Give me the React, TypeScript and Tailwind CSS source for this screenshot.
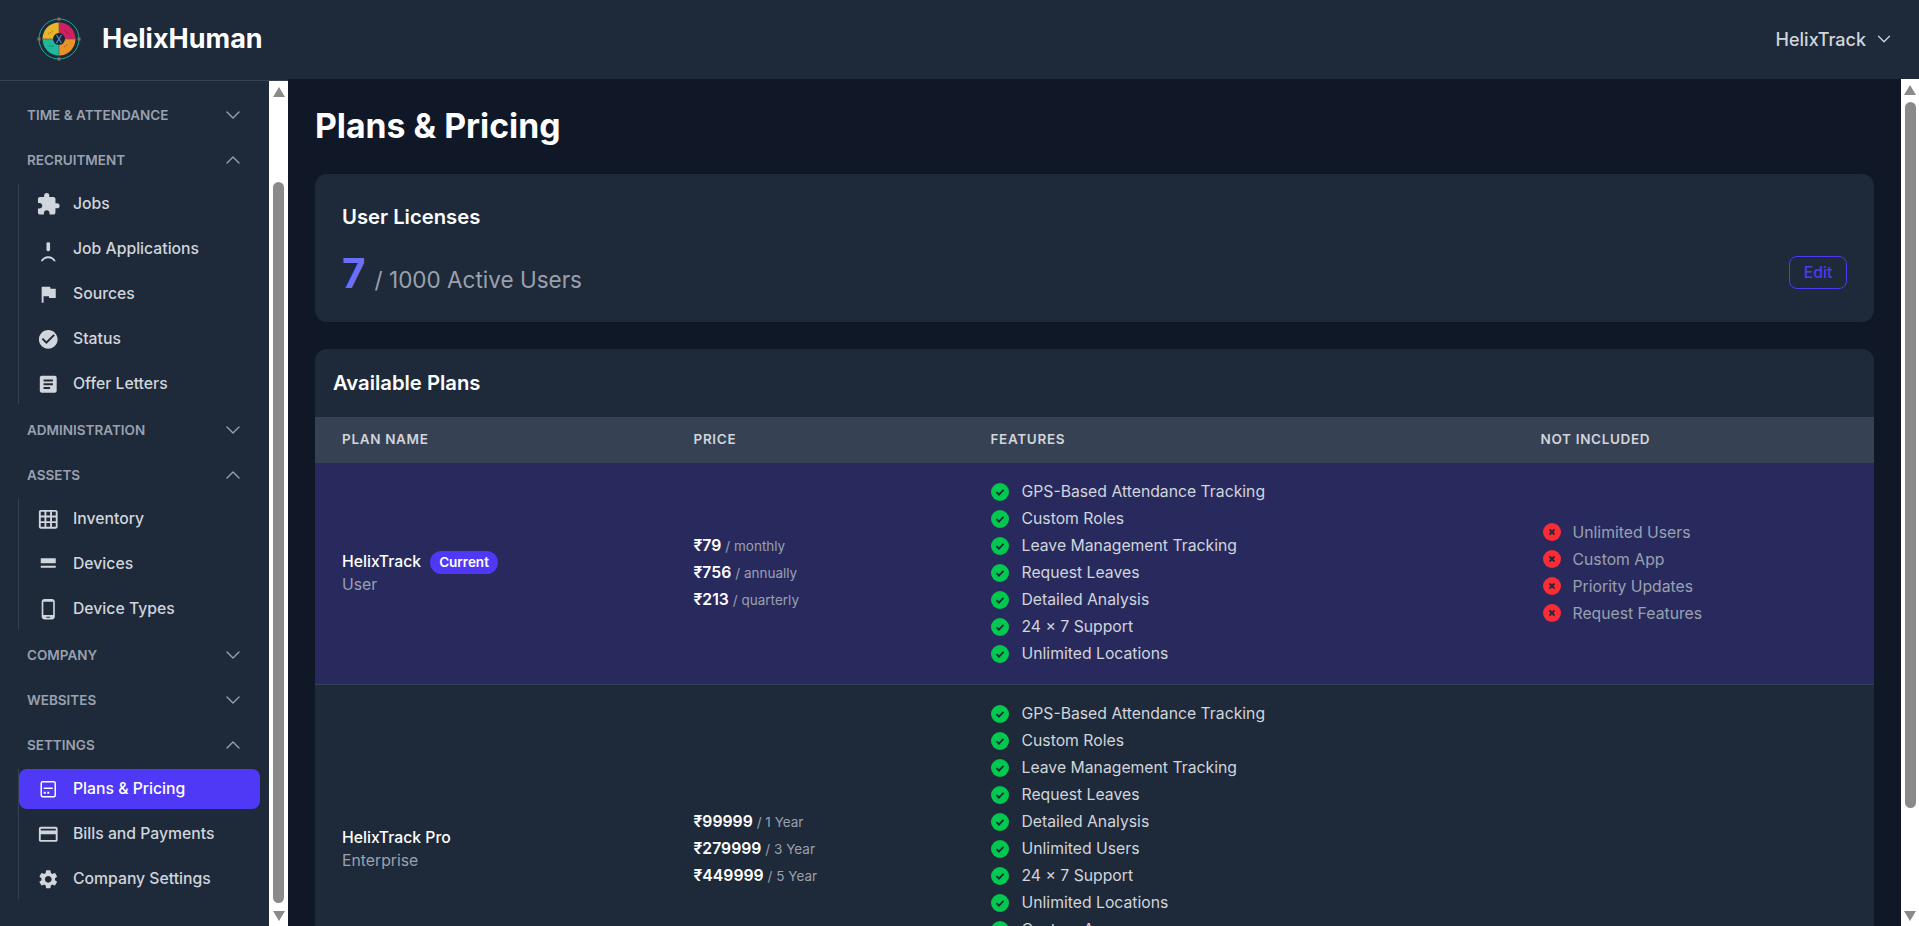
import React from "react";
import {
  MdExtension, MdFlag, MdCheckCircle, MdArticle, MdGridOn, MdPhoneAndroid, MdOutlineCreditCard, MdSettings,
} from "react-icons/md";
import { FiChevronDown, FiChevronUp } from "react-icons/fi";

const FONT = "font-['Inter',sans-serif]";

function JobAppIcon() {
  return (
    <svg viewBox="-1.25 -1.25 22.5 22.5" className="w-[22.5px] h-[22.5px] overflow-visible" fill="currentColor">
      <rect x="8.2" y="3" width="3.6" height="9" rx="1.4" />
      <path d="M2.500 22c1-3 4-5 7.500-5s6.500 2 7.500 5h-2c-1-2-3-3-5.500-3s-4.500 1-5.500 3z" />
    </svg>
  );
}

function DevicesIcon() {
  return (
    <svg viewBox="-1.25 -1.25 22.5 22.5" className="w-[22.5px] h-[22.5px]" fill="currentColor">
      <rect x="2.500" y="4" width="15" height="5" />
      <rect x="2.500" y="11.500" width="15" height="2" />
    </svg>
  );
}

function PlansIcon() {
  return (
    <svg viewBox="-1.25 -1.25 22.5 22.5" className="w-[22.5px] h-[22.5px]" fill="none" stroke="currentColor" strokeWidth="1.5">
      <rect x="3" y="2.500" width="14" height="15" rx="1.5" />
      <path d="M5.500 9h9" />
      <rect x="5.500" y="12.500" width="2" height="2" fill="currentColor" stroke="none" />
      <rect x="9" y="12.500" width="2" height="2" fill="currentColor" stroke="none" />
    </svg>
  );
}

function Logo() {
  return (
    <svg viewBox="0 0 44 44" className="w-11 h-11" aria-hidden="true">
      <circle cx="22" cy="22" r="20" fill="none" stroke="#14b8a6" strokeWidth="0.900" />
      <rect x="20.500" y="0.500" width="3" height="3" fill="#8b7355" />
      <rect x="20.500" y="40.500" width="3" height="3" fill="#8b7355" />
      <rect x="0.500" y="20.500" width="3" height="3" fill="#8b7355" />
      <rect x="40.500" y="20.500" width="3" height="3" fill="#8b7355" />
      <path d="M22 5.500a16.500 16.500 0 0 0-16.500 16.500h16.500z" fill="#eab52a" />
      <path d="M22 5.500a16.500 16.500 0 0 1 16.500 16.500h-16.500z" fill="#d0205f" />
      <path d="M5.500 22a16.500 16.500 0 0 0 16.500 16.500v-16.500z" fill="#20b89a" />
      <path d="M38.500 22a16.500 16.500 0 0 1-16.500 16.500v-16.500z" fill="#e8932a" />
      <path d="M22 5v34M5 22h34" stroke="#6b5f52" strokeWidth="0.800" />
      <path d="M11 17l5-3M27 13l5 4M12 29h4M27 30l4-3" stroke="#00000055" strokeWidth="1" strokeDasharray="1.500 1" fill="none" />
      <circle cx="22" cy="22" r="6" fill="#16263a" />
      <path d="M19.500 18l5 8M24.500 18l-5 8" stroke="#5b8fc9" strokeWidth="1.100" />
    </svg>
  );
}

type Item = { label: string; icon: React.ReactNode; active?: boolean };
type Section = { title: string; items?: Item[] };

const icon = "w-[22.5px] h-[22.5px]";
const sections: Section[] = [
  { title: "Time & Attendance" },
  {
    title: "Recruitment",
    items: [
      { label: "Jobs", icon: <MdExtension className="w-[22.5px] h-[22.5px] scale-[1.1]" /> },
      { label: "Job Applications", icon: <JobAppIcon /> },
      { label: "Sources", icon: <MdFlag className={icon} /> },
      { label: "Status", icon: <MdCheckCircle className={icon} /> },
      { label: "Offer Letters", icon: <MdArticle className={icon} /> },
    ],
  },
  { title: "Administration" },
  {
    title: "Assets",
    items: [
      { label: "Inventory", icon: <MdGridOn className={icon} /> },
      { label: "Devices", icon: <DevicesIcon /> },
      { label: "Device Types", icon: <MdPhoneAndroid className={icon} /> },
    ],
  },
  { title: "Company" },
  { title: "Websites" },
  {
    title: "Settings",
    items: [
      { label: "Plans & Pricing", icon: <PlansIcon />, active: true },
      { label: "Bills and Payments", icon: <MdOutlineCreditCard className={icon} /> },
      { label: "Company Settings", icon: <MdSettings className={icon} /> },
    ],
  },
];

function Check() {
  return (
    <svg viewBox="0 0 18 18" className="w-[18px] h-[18px] shrink-0">
      <circle cx="9" cy="9" r="9" fill="#00c950" />
      <path d="M5.500 9.200l2.400 2.400 4.600-4.800" fill="none" stroke="#1e2939" strokeWidth="1.800" />
    </svg>
  );
}

function Cross() {
  return (
    <svg viewBox="0 0 18 18" className="w-[18px] h-[18px] shrink-0">
      <circle cx="9" cy="9" r="9" fill="#fb2c36" />
      <path d="M6.500 6.500l5 5M11.500 6.500l-5 5" fill="none" stroke="#1e2939" strokeWidth="1.800" />
    </svg>
  );
}

function Scrollbar({ thumb, width }: { thumb: string; width: string }) {
  return (
    <div className={`bg-white shrink-0 flex flex-col items-center h-full ${width}`}>
      <div className="w-0 h-0 mt-[6px] border-x-[6px] border-x-transparent border-b-[10px] border-b-[#8a8a8a]" />
      <div className={`w-[11px] rounded-full bg-[#8a8a8a] ${thumb}`} />
      <div className="mt-auto mb-[5px] w-0 h-0 border-x-[6px] border-x-transparent border-t-[10px] border-t-[#8a8a8a]" />
    </div>
  );
}

const plan1 = ["GPS-Based Attendance Tracking", "Custom Roles", "Leave Management Tracking", "Request Leaves", "Detailed Analysis", "24 × 7 Support", "Unlimited Locations"];
const missing = ["Unlimited Users", "Custom App", "Priority Updates", "Request Features"];
const plan2 = ["GPS-Based Attendance Tracking", "Custom Roles", "Leave Management Tracking", "Request Leaves", "Detailed Analysis", "Unlimited Users", "24 × 7 Support", "Unlimited Locations", "Custom App", "Priority Updates", "Request Features"];

function Features({ list }: { list: string[] }) {
  return (
    <ul className="flex flex-col gap-[6px]">
      {list.map((f) => (
        <li key={f} className="flex items-center gap-[13px] text-[15.75px] leading-[21px] text-gray-300">
          <Check />
          {f}
        </li>
      ))}
    </ul>
  );
}

function Prices({ list }: { list: [string, string][] }) {
  return (
    <div className="flex flex-col gap-[6px]">
      {list.map(([p, s]) => (
        <div key={p} className="leading-[21px] text-white text-[15.75px] font-semibold">
          {p} <span className="text-[13.5px] leading-none font-normal text-gray-400">/ {s}</span>
        </div>
      ))}
    </div>
  );
}

const cols = "grid grid-cols-[351.500px_297px_550px_1fr]";

export default function App() {
  return (
    <div className={`h-screen flex overflow-hidden bg-gray-900 ${FONT}`}>
      <aside className="w-[288px] shrink-0 flex flex-col bg-gray-800 h-full">
        <div className="h-[81px] shrink-0 border-b border-gray-700 flex items-center pl-[37px] pb-[2px]">
          <Logo />
          <span className="ml-[21px] text-[27px] font-bold text-white">HelixHuman</span>
        </div>
        <div className="flex flex-1 min-h-0">
          <nav className="flex-1 overflow-hidden pt-[16px] pl-[19px] pr-[9px]">
            {sections.map((s) => (
              <div key={s.title} className={s.items ? "mb-[8px]" : "mb-[9px]"}>
                <div className="h-[36px] flex items-center justify-between pl-[8px] pr-[15px] text-gray-400">
                  <span className="text-[13.5px] font-semibold uppercase">{s.title}</span>
                  {s.items ? <FiChevronUp className="w-6 h-6 stroke-[1.4]" /> : <FiChevronDown className="w-6 h-6 stroke-[1.4]" />}
                </div>
                {s.items && (
                  <ul className="mt-[6px] flex flex-col gap-[5px] border-l border-gray-700 -ml-px">
                    {s.items.map((it) => (
                      <li
                        key={it.label}
                        className={`h-[40px] rounded-lg flex items-center pl-[18px] gap-[13.500px] text-[15.75px] font-medium ${
                          it.active ? "bg-indigo-600 text-white" : "text-gray-300"
                        }`}
                      >
                        {it.icon}
                        {it.label}
                      </li>
                    ))}
                  </ul>
                )}
              </div>
            ))}
          </nav>
          <Scrollbar width="w-[19px]" thumb="mt-[85px] h-[721px]" />
        </div>
      </aside>

      <div className="flex-1 min-w-0 flex flex-col h-full">
        <header className="h-[79px] shrink-0 bg-gray-800 flex items-center justify-end pr-[24px] pb-[1px] gap-[7px] text-gray-300">
          <span className="text-[18px] font-medium">HelixTrack</span>
          <FiChevronDown className="w-[22px] h-[22px] stroke-[1.4]" />
        </header>
        <div className="flex flex-1 min-h-0">
          <main className="flex-1 min-w-0 overflow-hidden pl-[27px] pr-[27px] pt-[26px]">
            <h1 className="text-[33.75px] leading-[42px] font-bold text-white">Plans &amp; Pricing</h1>
            <section className="mt-[27px] h-[148px] rounded-xl bg-gray-800 pl-[27px] pr-[27px] pt-[29px] pb-[33px] flex items-start justify-between">
              <div>
                <h2 className="text-[20.25px] leading-[28px] font-semibold text-white">User Licenses</h2>
                <p className="mt-[21px] flex items-baseline gap-[9px]">
                  <span className="text-[40.5px] leading-[44px] font-bold text-[#6a6ff8]">7</span>
                  <span className="text-[22.5px] text-gray-400">/ 1000 Active Users</span>
                </p>
              </div>
              <button className="self-end w-[58px] h-[33px] rounded-lg border border-indigo-600 text-indigo-600 text-[15.75px] font-medium">Edit</button>
            </section>

            <section className="mt-[27px] rounded-t-xl bg-gray-800">
              <h2 className="h-[68px] flex items-center pl-[18px] text-[20.25px] font-semibold text-white">Available Plans</h2>
              <div className={`${cols} h-[46px] pb-[1px] items-center bg-gray-700 text-[13.5px] font-semibold uppercase tracking-[0.675px] text-gray-300`}>
                <div className="px-[27px]">Plan Name</div>
                <div className="px-[27px]">Price</div>
                <div className="px-[27px]">Features</div>
                <div className="px-[27px]">Not Included</div>
              </div>
              <div className={`${cols} items-center bg-[#282a5e] border-b border-gray-700 pt-[18px] pb-[20px]`}>
                <div className="px-[27px] pt-[2px]">
                  <div className="flex items-center gap-[9px] text-[15.75px] leading-[22.500px] font-medium text-white">
                    HelixTrack
                    <span className="h-[23px] px-[9px] flex items-center rounded-full bg-indigo-600 text-[13.5px] font-semibold">Current</span>
                  </div>
                  <div className="text-[15.75px] leading-[22.500px] text-gray-400">User</div>
                </div>
                <div className="px-[27px]">
                  <Prices list={[["₹79", "monthly"], ["₹756", "annually"], ["₹213", "quarterly"]]} />
                </div>
                <div className="px-[27px]"><Features list={plan1} /></div>
                <div className="px-[27px]">
                  <ul className="flex flex-col gap-[6px]">
                    {missing.map((f) => (
                      <li key={f} className="flex items-center gap-[12px] ml-[2px] text-[15.75px] leading-[21px] text-gray-400">
                        <Cross />
                        {f}
                      </li>
                    ))}
                  </ul>
                </div>
              </div>
              <div className={`${cols} items-center pt-[18px] pb-[20px]`}>
                <div className="px-[27px] pt-[2px]">
                  <div className="text-[15.75px] leading-[22.500px] font-medium text-white">HelixTrack Pro</div>
                  <div className="text-[15.75px] leading-[22.500px] text-gray-400">Enterprise</div>
                </div>
                <div className="px-[27px]">
                  <Prices list={[["₹99999", "1 Year"], ["₹279999", "3 Year"], ["₹449999", "5 Year"]]} />
                </div>
                <div className="px-[27px]"><Features list={plan2} /></div>
                <div />
              </div>
            </section>
          </main>
          <Scrollbar width="w-[18px]" thumb="mt-[7px] h-[706px]" />
        </div>
      </div>
    </div>
  );
}
